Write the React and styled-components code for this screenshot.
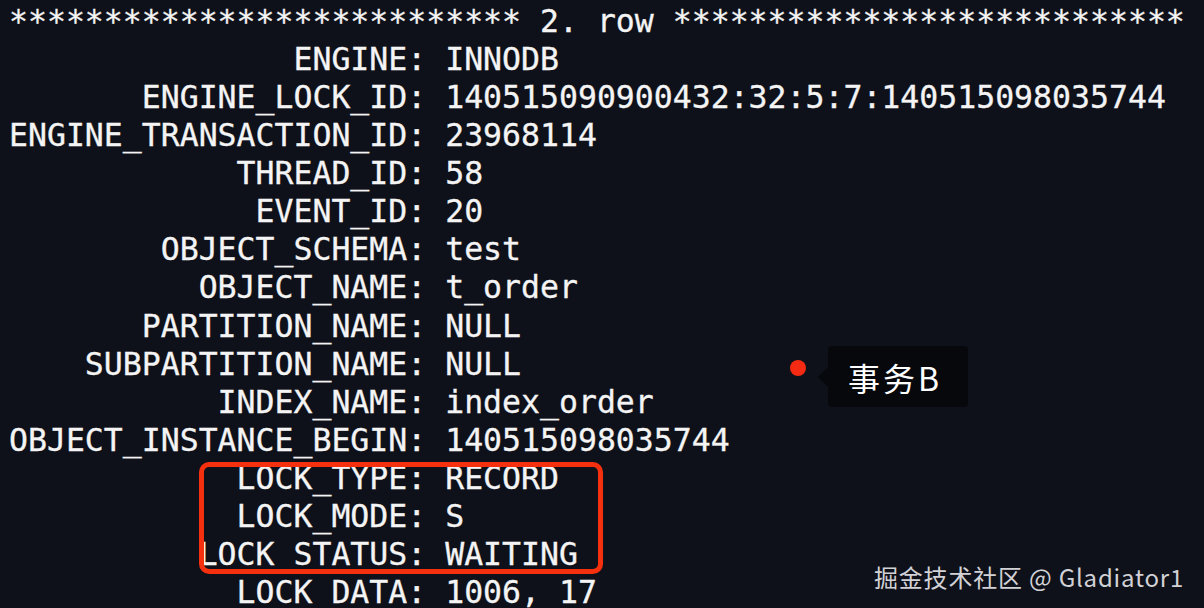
import React from "react";
import styled, { createGlobalStyle } from "styled-components";

const Global = createGlobalStyle`
  html, body { margin: 0; padding: 0; background: #0f111a; }
  body { width: 1204px; height: 608px; overflow: hidden; }
`;

const Screen = styled.div`
  position: relative;
  width: 1204px;
  height: 608px;
  background: #0f111a;
  overflow: hidden;
`;

const Terminal = styled.pre`
  margin: 0;
  padding: 2px 0 0 9px;
  font-family: "DejaVu Sans Mono", "Liberation Mono", monospace;
  font-size: 31.5px;
  line-height: 38.07px;
  color: #f4f4f4;
  white-space: pre;
  -webkit-text-stroke: 0.3px #f4f4f4;
`;

const Line = styled.div`
  height: 38.07px;
`;

const Highlight = styled.div`
  position: absolute;
  left: 199px;
  top: 462px;
  width: 404px;
  height: 112px;
  box-sizing: border-box;
  border: 5px solid #f5300f;
  border-radius: 10px;
`;

const Marker = styled.div`
  position: absolute;
  left: 790px;
  top: 360px;
  width: 16px;
  height: 16px;
  border-radius: 50%;
  background: #f52a12;
`;

const Tooltip = styled.div`
  position: absolute;
  left: 828px;
  top: 346px;
  width: 140px;
  height: 61px;
  box-sizing: border-box;
  display: flex;
  align-items: center;
  padding-left: 20px;
  background: #07080b;
  border-radius: 4px;
  font-family: "Noto Sans CJK SC", "Noto Sans", sans-serif;
  font-size: 32px;
  color: #ffffff;
  letter-spacing: 3px;

  &::before {
    content: "";
    position: absolute;
    left: -10px;
    top: 21px;
    border-style: solid;
    border-width: 10px 10px 10px 0;
    border-color: transparent #07080b transparent transparent;
  }
`;

const Watermark = styled.div`
  position: absolute;
  right: 20px;
  bottom: 14px;
  font-family: "Noto Sans CJK SC", "Noto Sans", sans-serif;
  font-size: 24px;
  letter-spacing: 0.8px;
  color: #d2d2d6;
  white-space: nowrap;
`;

const rows = [
  ["ENGINE", "INNODB"],
  ["ENGINE_LOCK_ID", "140515090900432:32:5:7:140515098035744"],
  ["ENGINE_TRANSACTION_ID", "23968114"],
  ["THREAD_ID", "58"],
  ["EVENT_ID", "20"],
  ["OBJECT_SCHEMA", "test"],
  ["OBJECT_NAME", "t_order"],
  ["PARTITION_NAME", "NULL"],
  ["SUBPARTITION_NAME", "NULL"],
  ["INDEX_NAME", "index_order"],
  ["OBJECT_INSTANCE_BEGIN", "140515098035744"],
  ["LOCK_TYPE", "RECORD"],
  ["LOCK_MODE", "S"],
  ["LOCK_STATUS", "WAITING"],
  ["LOCK_DATA", "1006, 17"],
];

export default function App() {
  const stars = "*".repeat(27);
  return (
    <Screen>
      <Global />
      <Terminal>
        <Line>{`${stars} 2. row ${stars}`}</Line>
        {rows.map(([k, v]) => (
          <Line key={k}>{`${k.padStart(21, " ")}: ${v}`}</Line>
        ))}
      </Terminal>
      <Highlight />
      <Marker />
      <Tooltip>事务B</Tooltip>
      <Watermark>掘金技术社区 @ Gladiator1</Watermark>
    </Screen>
  );
}
